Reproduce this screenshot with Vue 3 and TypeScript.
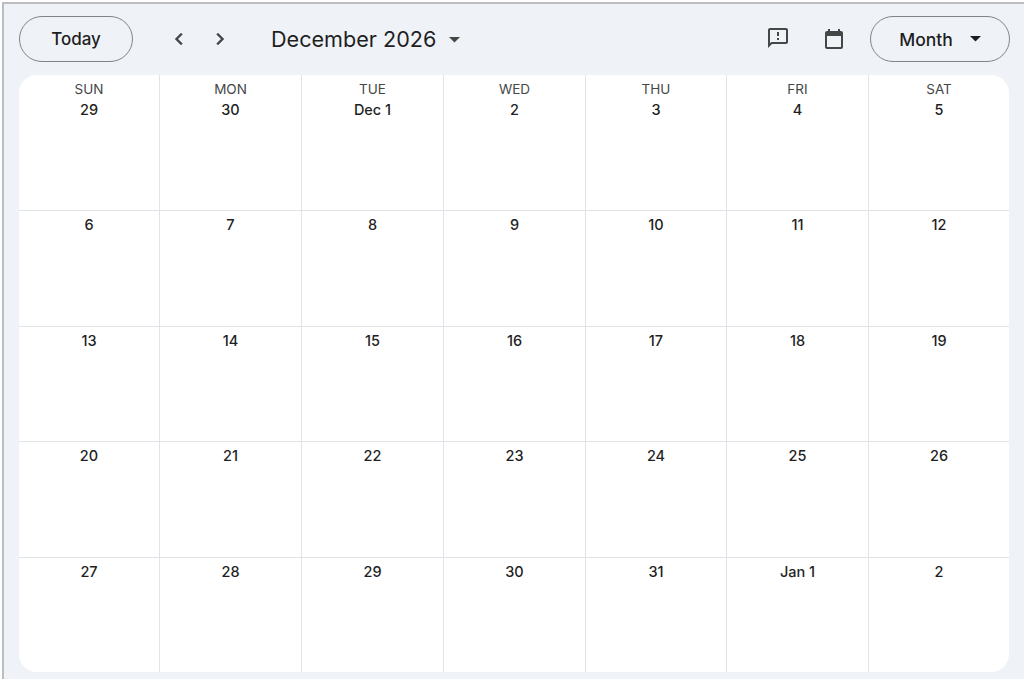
<script setup lang="ts">
const heads = ['SUN', 'MON', 'TUE', 'WED', 'THU', 'FRI', 'SAT']
const days = [
  '29', '30', 'Dec 1', '2', '3', '4', '5',
  '6', '7', '8', '9', '10', '11', '12',
  '13', '14', '15', '16', '17', '18', '19',
  '20', '21', '22', '23', '24', '25', '26',
  '27', '28', '29', '30', '31', 'Jan 1', '2',
]
</script>

<template>
  <div class="frame">
    <header class="bar">
      <button class="pill today">Today</button>
      <div class="nav">
        <svg class="chev" viewBox="0 0 24 24" width="24" height="24"><path d="M15.41 7.41 14 6l-6 6 6 6 1.41-1.41L10.83 12z" /></svg>
        <svg class="chev" viewBox="0 0 24 24" width="24" height="24"><path d="M8.59 16.59 10 18l6-6-6-6-1.41 1.41L13.17 12z" /></svg>
      </div>
      <div class="title">December 2026</div>
      <svg class="caret" viewBox="0 0 10 5" width="11" height="5.5"><path d="M0 0l5 5 5-5z" /></svg>
      <div class="spacer"></div>
      <svg class="ico fb" viewBox="0 0 24 24" width="24" height="24"><path d="M20 2H4c-1.1 0-2 .9-2 2v18l4-4h14c1.1 0 2-.9 2-2V4c0-1.1-.9-2-2-2zm0 14H5.17L4 17.17V4h16v12zM11 12h2v2h-2zm0-6h2v4h-2z" /></svg>
      <svg class="ico cal" viewBox="0 0 24 24" width="24" height="24"><path d="M19 4h-1V2h-2v2H8V2H6v2H5c-1.1 0-2 .9-2 2v14c0 1.1.9 2 2 2h14c1.1 0 2-.9 2-2V6c0-1.1-.9-2-2-2zm0 16H5V9h14v11z" /></svg>
      <button class="pill month">Month<svg class="caret dark" viewBox="0 0 10 5" width="11" height="5.5"><path d="M0 0l5 5 5-5z" /></svg></button>
    </header>
    <main class="card">
      <div v-for="(d, i) in days" :key="i" class="cell" :class="{ first: i < 7 }">
        <div v-if="i < 7" class="head">{{ heads[i] }}</div>
        <div class="num">{{ d }}</div>
      </div>
    </main>
  </div>
</template>

<style>
html, body { margin: 0; background: #fff; }
</style>

<style scoped>
.frame {
  box-sizing: border-box;
  width: 1022px;
  height: 677px;
  margin: 2px 0 0 2px;
  border-top: 2px solid #bcbdc1;
  border-left: 2px solid #bcbdc1;
  background: #eff3f8;
  font-family: Inter, Roboto, sans-serif;
  overflow: hidden;
}
.bar {
  box-sizing: border-box;
  height: 71px;
  padding: 12px 14px 0 15px;
  display: flex;
  align-items: flex-start;
  color: #1f1f1f;
}
.pill {
  box-sizing: border-box;
  height: 46px;
  border: 1px solid #7f8488;
  border-radius: 23px;
  background: transparent;
  font: 500 17px Inter, Roboto, sans-serif;
  color: #1f1f1f;
  padding: 0;
}
.today { width: 114px; }
.month {
  width: 140px;
  display: flex;
  align-items: center;
  justify-content: center;
  gap: 17px;
  margin-left: 24px;
  font-size: 17.5px;
}
.nav { display: flex; gap: 17px; margin: 11px 0 0 34px; }
.chev { fill: #444746; stroke: #444746; stroke-width: 0.4; }
.title { font-size: 21.6px; line-height: 46px; margin-left: 39px; color: #1f1f1f; }
.caret { fill: #444746; margin: 21px 0 0 13px; }
.caret.dark { margin: 0; fill: #1f1f1f; }
.spacer { flex: 1; }
.ico { fill: #444746; margin-top: 10px; }
.cal { margin-top: 11px; }
.fb { margin-right: 32px; }
.card {
  box-sizing: border-box;
  width: 990px;
  height: 597px;
  margin-left: 15px;
  display: grid;
  grid-template-columns: 141px 142px 142px 142px 141px 142px 1fr;
  grid-template-rows: 136px 116px 115px 116px 114px;
  background: #fff;
  border-radius: 18px;
  overflow: hidden;
}
.cell {
  box-sizing: border-box;
  border-right: 1px solid #e0e4e9;
  border-bottom: 1px solid #e0e4e9;
  padding-top: 4px;
  text-align: center;
}
.cell.first { padding-top: 6px; }
.cell:nth-child(7n) { border-right: 0; }
.cell:nth-last-child(-n + 7) { border-bottom: 0; }
.head { font-size: 13.5px; line-height: 17px; color: #444746; }
.num { font-size: 14.5px; font-weight: 500; line-height: 20px; color: #1f1f1f; }
.first .num { margin-top: 2px; }
</style>
